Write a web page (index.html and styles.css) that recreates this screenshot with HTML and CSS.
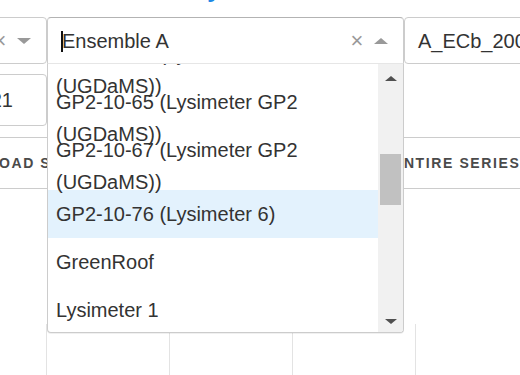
FILE: index.html
```html
<!DOCTYPE html>
<html>
<head>
    <meta charset="utf-8" />
    <title>Ensemble Summary</title>
    <meta name="viewport" content="width=device-width, initial-scale=1">
    <link rel="stylesheet" href="styles.css">
</head>
<body>
    <div class="page">
        <h1 class="title">Ensemble Summary</h1>

        <div class="selects">
            <div class="select">
                <div class="select-value">Lysimeter Site</div>
                <span class="clear-zone">×</span>
                <span class="arrow-zone"><span class="arrow down"></span></span>
            </div>

            <div class="select-wrap">
                <div class="select open">
                    <div class="select-value"><span class="caret"></span>Ensemble A</div>
                    <span class="clear-zone">×</span>
                    <span class="arrow-zone"><span class="arrow up"></span></span>
                </div>
                <div class="menu">
                    <div class="options">
                        <div class="option-list">
                            <div class="option">GP2-10-64 (Lysimeter GP2 (UGDaMS))</div>
                            <div class="option">GP2-10-65 (Lysimeter GP2 (UGDaMS))</div>
                            <div class="option">GP2-10-67 (Lysimeter GP2 (UGDaMS))</div>
                            <div class="option focused">GP2-10-76 (Lysimeter 6)</div>
                            <div class="option">GreenRoof</div>
                            <div class="option">Lysimeter 1</div>
                            <div class="option">Lysimeter 2</div>
                        </div>
                    </div>
                    <div class="scrollbar">
                        <div class="sb-btn top"><span class="sb-arrow up"></span></div>
                        <div class="sb-track"><div class="sb-thumb"></div></div>
                        <div class="sb-btn bottom"><span class="sb-arrow down"></span></div>
                    </div>
                </div>
            </div>

            <div class="select">
                <div class="select-value">A_ECb_2009-2021</div>
            </div>
        </div>

        <div class="fields">
            <input class="field" type="text" value="12/31/2021">
        </div>

        <div class="actions">
            <button class="btn">Download Selection</button>
            <button class="btn">Download Entire Series</button>
        </div>

        <div class="table">
            <div class="cell first"></div>
            <div class="cell"></div>
            <div class="cell"></div>
            <div class="cell"></div>
            <div class="cell"></div>
        </div>
    </div>
</body>
</html>
```

FILE: styles.css
```css
*{
    margin: 0;
    padding: 0;
    box-sizing: border-box;
}
html,body{
    overflow: hidden;
}
body{
    font-family: "Liberation Sans", Arial, sans-serif;
    color: #333;
    background: #fff;
}
.page{
    width: 1071px;
    margin-left: -310px;
}
.title{
    font-family: Roboto, "Liberation Sans", sans-serif;
    font-weight: 400;
    font-size: 36px;
    line-height: 40px;
    height: 40px;
    color: #1e88e5;
    padding-left: 214px;
    margin-top: -38px;
    margin-bottom: 15px;
    white-space: nowrap;
}
.selects{
    display: grid;
    grid-template-columns: 357px 357px 357px;
}
.select{
    height: 47px;
    border: 1px solid #ccc;
    border-radius: 4px;
    display: flex;
    align-items: center;
    font-size: 20px;
    background: #fff;
}
.select.open{
    border-color: #b3b3b3 #ccc #d9d9d9;
    border-radius: 4px 4px 0 0;
}
.select-value{
    flex: 1;
    padding-left: 13px;
    white-space: nowrap;
    overflow: hidden;
    line-height: 24px;
}
.caret{
    display: inline-block;
    width: 2px;
    height: 21px;
    background: #111;
    vertical-align: -4px;
    margin-right: -1px;
}
.clear-zone{
    width: 18px;
    text-align: center;
    color: #999;
    font-size: 22px;
    line-height: 1;
}
.arrow-zone{
    width: 30px;
    margin-right: 7px;
    display: flex;
    justify-content: center;
}
.arrow{
    width: 0;
    height: 0;
    border-style: solid;
    border-color: transparent;
}
.arrow.down{
    border-width: 6px 7px 0;
    border-top-color: #999;
}
.arrow.up{
    border-width: 0 7px 6px;
    border-bottom-color: #999;
}
.select-wrap{
    position: relative;
}
/* open dropdown */
.menu{
    position: absolute;
    top: 100%;
    left: 0;
    width: 100%;
    height: 270px;
    margin-top: -1px;
    z-index: 2;
    display: flex;
    background: #fff;
    border: 1px solid #ccc;
    border-top-color: #e6e6e6;
    border-radius: 0 0 4px 4px;
    box-shadow: 0 1px 0 rgba(0,0,0,0.06);
    overflow: hidden;
}
.options{
    flex: 1;
    overflow: hidden;
}
.option-list{
    margin-top: -18px;
}
.option{
    height: 48px;
    display: flex;
    align-items: center;
    padding: 0 8px;
    font-size: 20px;
    line-height: 32px;
    color: #333;
}
.option.focused{
    background: #e3f2fd;
}
.scrollbar{
    width: 25px;
    background: #f1f1f1;
    display: flex;
    flex-direction: column;
}
.sb-btn{
    display: flex;
    align-items: center;
    justify-content: center;
}
.sb-btn.top{
    height: 28px;
}
.sb-btn.bottom{
    height: 22px;
}
.sb-arrow{
    width: 0;
    height: 0;
    border-style: solid;
    border-color: transparent;
}
.sb-arrow.up{
    border-width: 0 6px 5px;
    border-bottom-color: #505050;
}
.sb-arrow.down{
    border-width: 5px 6px 0;
    border-top-color: #505050;
}
.sb-track{
    flex: 1;
    padding: 0 2px;
}
.sb-thumb{
    height: 51px;
    margin-top: 62px;
    background: #c1c1c1;
}
.fields{
    display: grid;
    grid-template-columns: 357px 357px 357px;
    margin-top: 10px;
}
.field{
    height: 52px;
    border: 1px solid #ccc;
    border-radius: 4px;
    font-family: "Liberation Sans", Arial, sans-serif;
    font-size: 20px;
    color: #333;
    text-align: right;
    padding-right: 33px;
    outline: none;
}
.actions{
    display: flex;
    margin-top: 11px;
    padding-left: 162px;
    height: 52px;
    border-top: 1px solid #ccc;
    border-bottom: 1px solid #ccc;
}
.btn{
    width: 369px;
    border: none;
    background: none;
    font-family: "Liberation Sans", Arial, sans-serif;
    font-size: 14px;
    font-weight: 700;
    letter-spacing: 1.6px;
    text-transform: uppercase;
    color: #4a4a4a;
    white-space: nowrap;
}
.table{
    display: grid;
    grid-template-columns: 356px repeat(4, 123px);
    margin-top: 135px;
    height: 60px;
}
.cell{
    border-left: 1px solid #e3e3e3;
}
.cell.first{
    border-left: none;
}
```
